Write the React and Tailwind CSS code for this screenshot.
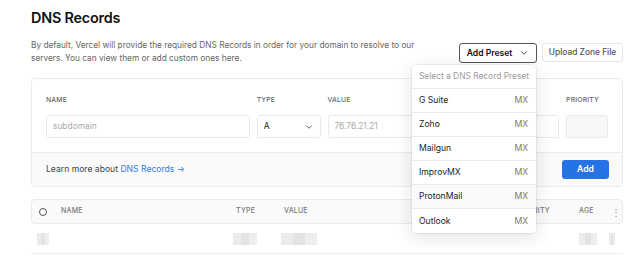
import React from 'react';
import { FiChevronDown } from 'react-icons/fi';

const presets = ['G Suite', 'Zoho', 'Mailgun', 'ImprovMX', 'ProtonMail', 'Outlook'];

const Blur = ({ className }) => (
  <div className={`h-[12px] rounded-[1px] ${className}`}>
    <div className="flex h-full">
      <div className="flex-1 bg-[#ececec]" />
      <div className="flex-1 bg-[#e3e3e3]" />
      <div className="flex-1 bg-[#eeeeee]" />
    </div>
  </div>
);

const App = () => {
  return (
    <div className="min-h-[259px] w-[640px] overflow-hidden bg-white font-['Inter',sans-serif] text-[#111]">
      <div className="ml-[31px] w-[592px]">
        {/* Heading */}
        <h1 className="pt-[8px] text-[14.4px] leading-[20px] font-semibold tracking-[-0.2px]">DNS Records</h1>

        <div className="mt-[11px] flex items-start justify-between">
          <p className="w-[392px] text-[8.3px] leading-[13px] text-[#666]">
            By default, Vercel will provide the required DNS Records in order for your domain to resolve to our servers. You can view them or add custom ones here.
          </p>
          <div className="mt-[4px] flex gap-[5px]">
            <div className="relative">
              <button className="flex h-[20px] w-[78px] items-center justify-center gap-[7px] rounded-[3px] border border-[#555] text-[8.6px] font-semibold text-[#111]">
                Add Preset
                <FiChevronDown className="text-[10px] text-[#333]" />
              </button>
              {/* Preset menu */}
              <div className="absolute top-[22px] right-[1px] z-10 w-[124px] overflow-hidden rounded-[4px] bg-white shadow-[0_4px_18px_rgba(0,0,0,0.12)] ring-1 ring-black/5">
                <div className="flex h-[24px] items-center border-b border-[#eaeaea] px-[7px] text-[8.4px] text-[#9a9a9a]">
                  Select a DNS Record Preset
                </div>
                {presets.map((p, i) => (
                  <div
                    key={p}
                    className={`flex h-[24px] items-center justify-between pr-[8px] pl-[7px] text-[8.6px] ${
                      i < presets.length - 1 ? 'border-b border-[#eaeaea]' : ''
                    } ${p === 'ProtonMail' ? 'bg-[#fafafa]' : ''}`}
                  >
                    <span className="text-[#222]">{p}</span>
                    <span className="text-[#777]">MX</span>
                  </div>
                ))}
              </div>
            </div>
            <button className="flex h-[19px] w-[81px] items-center justify-center rounded-[3px] border border-[#e5e5e5] text-[8.4px] font-medium text-[#555]">
              Upload Zone File
            </button>
          </div>
        </div>

        {/* Add record form */}
        <div className="mt-[13px] overflow-hidden rounded-[4px] border border-[#ebebeb]">
          <div className="flex gap-[7px] px-[14px] pt-[17px] pb-[14px]">
            <div className="w-[204px]">
              <div className="text-[6.8px] leading-[8px] font-medium tracking-[0.2px] text-[#666]">NAME</div>
              <div className="mt-[11px] flex h-[23px] items-center rounded-[3px] border border-[#eaeaea] px-[6px] text-[8.4px] text-[#aaa]">subdomain</div>
            </div>
            <div className="w-[64px]">
              <div className="text-[6.8px] leading-[8px] font-medium tracking-[0.2px] text-[#666]">TYPE</div>
              <div className="mt-[11px] flex h-[23px] items-center justify-between rounded-[3px] border border-[#eaeaea] pr-[6px] pl-[6px] text-[8.6px] text-[#222]">
                A
                <FiChevronDown className="text-[10px] text-[#444]" />
              </div>
            </div>
            <div className="w-[150px]">
              <div className="text-[6.8px] leading-[8px] font-medium tracking-[0.2px] text-[#666]">VALUE</div>
              <div className="mt-[11px] flex h-[23px] items-center rounded-[3px] border border-[#eaeaea] px-[6px] text-[8.4px] text-[#aaa]">76.76.21.21</div>
            </div>
            <div className="w-[75px]">
              <div className="text-[6.8px] leading-[8px] font-medium tracking-[0.2px] text-[#666]">TTL</div>
              <div className="mt-[11px] flex h-[23px] items-center rounded-[3px] border border-[#eaeaea] px-[6px] text-[8.4px] text-[#aaa]">60</div>
            </div>
            <div className="w-[42px]">
              <div className="text-[6.8px] leading-[8px] font-medium tracking-[0.2px] text-[#666]">PRIORITY</div>
              <div className="mt-[11px] h-[23px] rounded-[3px] border border-[#eaeaea] bg-[#f7f7f7]" />
            </div>
          </div>
          <div className="flex h-[34px] items-center justify-between border-t border-[#ebebeb] bg-[#fafafa] pr-[13px] pl-[14px]">
            <p className="text-[8.6px] text-[#444]">
              Learn more about <span className="text-[#2f7de1]">DNS Records →</span>
            </p>
            <button className="h-[19px] w-[47px] rounded-[3px] bg-[#2673e6] text-[8.6px] font-semibold text-white">Add</button>
          </div>
        </div>

        {/* Records table */}
        <div className="mt-[12px] flex h-[25px] items-center rounded-[4px] border border-[#ebebeb] bg-[#fafafa] text-[7px] font-medium tracking-[0.2px] text-[#777]">
          <div className="ml-[7px] h-[8px] w-[8px] rounded-full border border-[#555]" />
          <div className="ml-[14px] w-[175px]">NAME</div>
          <div className="w-[48px]">TYPE</div>
          <div className="w-[232px]">VALUE</div>
          <div className="w-[63px]">PRIORITY</div>
          <div className="w-[32px]">AGE</div>
          <div className="text-[10px] leading-none text-[#888]">⋮</div>
        </div>
        <div className="flex h-[30px] items-center border-b border-[#eee]">
          <Blur className="ml-[6px] w-[12px]" />
          <Blur className="ml-[184px] w-[24px]" />
          <Blur className="ml-[24px] w-[36px]" />
          <Blur className="ml-[262px] w-[18px]" />
          <Blur className="ml-[12px] w-[6px]" />
        </div>
      </div>
    </div>
  );
};

export default App;
